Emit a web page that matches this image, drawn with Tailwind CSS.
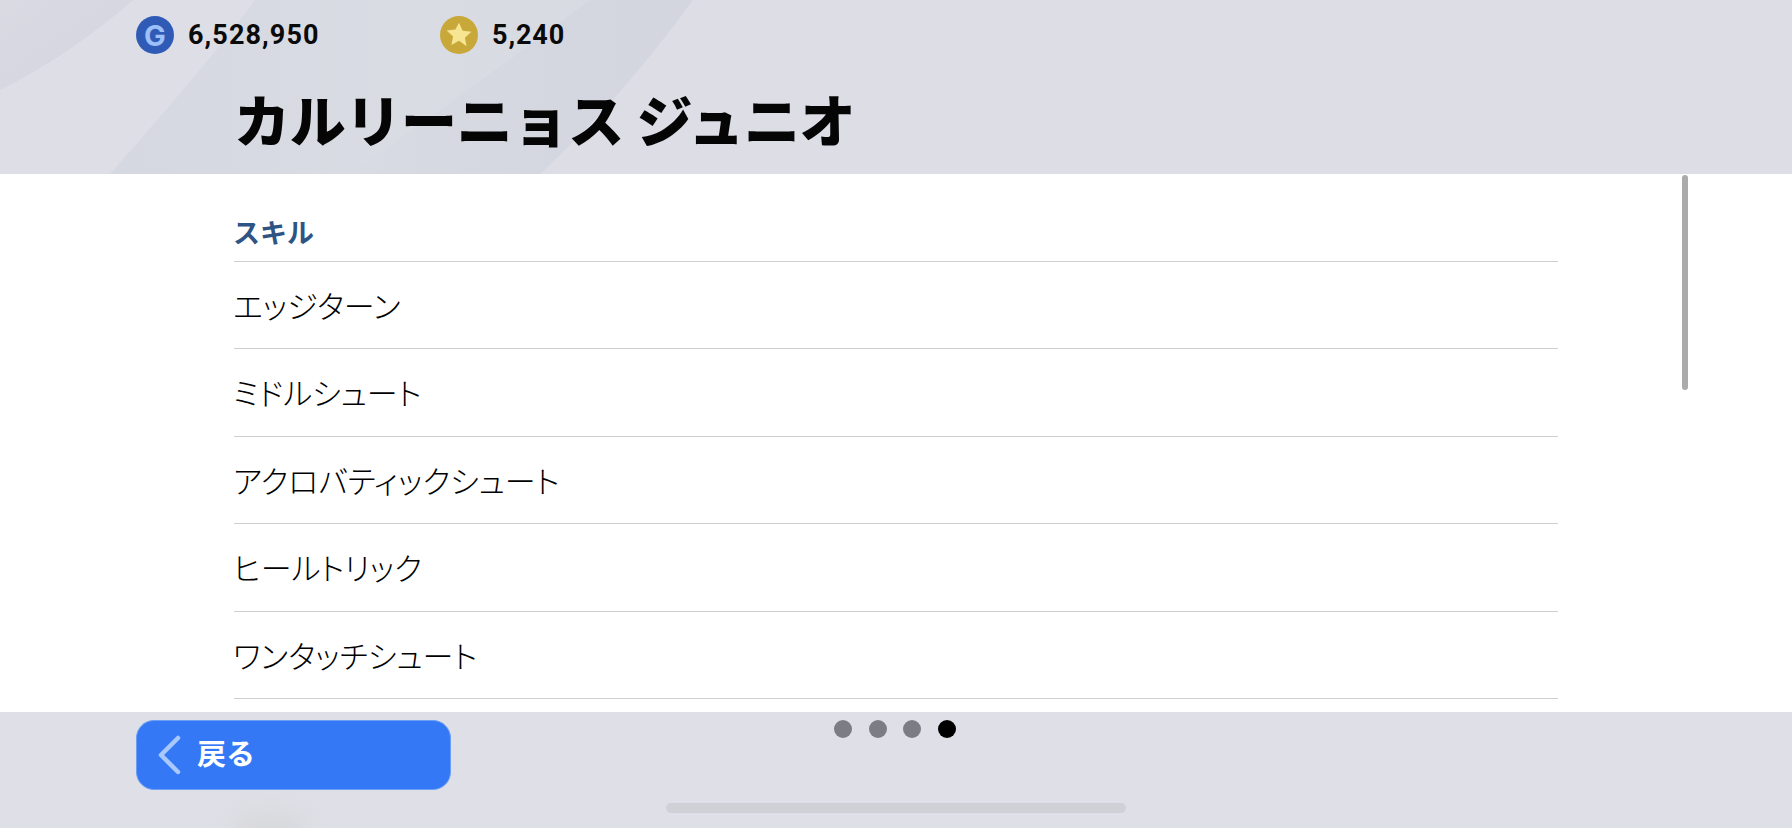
<!DOCTYPE html>
<html lang="ja">
<head>
  <meta charset="UTF-8" />
  <title>スキル</title>
  <script src="https://cdn.jsdelivr.net/npm/@tailwindcss/browser@4"></script>
</head>
<body class="bg-white font-['Noto_Sans_CJK_JP','Noto_Sans',sans-serif]">
  <div class="w-[1792px] h-[828px] flex flex-col overflow-hidden">

    <!-- header -->
    <header class="relative h-[174px] shrink-0 bg-[#dcdde5] overflow-hidden">
      <svg class="absolute inset-0" width="1792" height="174" viewBox="0 0 1792 174">
        <defs>
          <linearGradient id="band" x1="0" y1="0" x2="1" y2="0">
            <stop offset="0" stop-color="#d6d8e1" />
            <stop offset="0.5" stop-color="#dadce4" />
            <stop offset="1" stop-color="#d8dae2" />
          </linearGradient>
          <linearGradient id="edge" x1="0" y1="0" x2="1" y2="0">
            <stop offset="0" stop-color="#d9dbe3" />
            <stop offset="0.6" stop-color="#d4d7df" />
            <stop offset="1" stop-color="#d3d6df" />
          </linearGradient>
          <linearGradient id="corner" x1="0" y1="0" x2="1" y2="1">
            <stop offset="0" stop-color="#d9dae2" />
            <stop offset="1" stop-color="#d3d5de" />
          </linearGradient>
        </defs>
        <path d="M255 0 Q215 55 110 174 L540 174 Q620 100 693 0 Z" fill="url(#band)" />
        <path d="M590 0 Q470 90 350 174 L540 174 Q620 100 693 0 Z" fill="url(#edge)" />
        <path d="M0 90 Q70 55 133 0 L255 0 Q215 55 110 174 L0 174 Z" fill="#dddee6" />
        <path d="M0 0 L133 0 Q70 55 0 90 Z" fill="url(#corner)" />
      </svg>
      <div class="relative flex items-center h-[38px] mt-[16px] ml-[136px]">
        <div class="w-[304px] flex items-center gap-[14px]">
          <span class="w-[38px] h-[38px] rounded-full bg-[#2f5bb7] flex items-center justify-center text-[#9dc0f8] text-[29px] leading-none font-bold font-['Inter',sans-serif]">G</span>
          <span class="text-[27px] leading-none font-bold tracking-[1.1px] text-[#0a0a0a] font-['Roboto',sans-serif]">6,528,950</span>
        </div>
        <div class="flex items-center gap-[14px]">
          <span class="w-[38px] h-[38px] rounded-full bg-[#c9a83a] flex items-center justify-center">
            <svg width="30" height="30" viewBox="0 0 24 24"><path d="M12 2.2l2.9 6.4 7 .8-5.2 4.7 1.4 6.900L12 16.6l-6.100 3.400 1.400-6.900-5.200-4.700 7-.8z" fill="#f6e593" /></svg>
          </span>
          <span class="text-[27px] leading-none font-bold tracking-[0.9px] text-[#0a0a0a] font-['Roboto',sans-serif]">5,240</span>
        </div>
      </div>
      <h1 class="relative ml-[234px] mt-[29px] text-[56px] leading-[70px] font-black text-[#050505] whitespace-nowrap tracking-[-0.3px]">カルリーニョス ジュニオ</h1>
    </header>

    <!-- skill list -->
    <main class="relative h-[538px] shrink-0 bg-white overflow-hidden">
      <div class="ml-[234px] w-[1324px]">
        <h2 class="h-[88px] pt-[37px] -indent-[1px] text-[27px] leading-[42px] font-bold text-[#2e5483] border-b-[1.5px] border-[#cfcfd1]">スキル</h2>
        <ul class="text-[31px] text-black [font-feature-settings:'palt'] font-light -indent-[1px]">
          <li class="h-[87.4px] flex items-center border-b-[1.5px] border-[#cfcfd1]">エッジターン</li>
          <li class="h-[87.4px] flex items-center border-b-[1.5px] border-[#cfcfd1]">ミドルシュート</li>
          <li class="h-[87.4px] flex items-center border-b-[1.5px] border-[#cfcfd1]">アクロバティックシュート</li>
          <li class="h-[87.4px] flex items-center border-b-[1.5px] border-[#cfcfd1]">ヒールトリック</li>
          <li class="h-[87.4px] flex items-center border-b-[1.5px] border-[#cfcfd1]">ワンタッチシュート</li>
        </ul>
      </div>
      <div class="absolute left-[1682px] top-[1px] w-[6px] h-[215px] rounded-full bg-[#ababab]"></div>
    </main>

    <!-- footer -->
    <footer class="relative flex-1 bg-[#dfe0e7] overflow-hidden">
      <div class="absolute left-[235px] top-[102px] w-[70px] h-[30px] rounded-full bg-[#d6d7da] blur-md"></div>
      <div class="relative flex items-start pt-[8px] pl-[136px]">
        <button class="w-[315px] h-[70px] rounded-[18px] bg-[#3578f6] border border-[#6b9ff5] flex items-center text-white text-[29px] font-bold">
          <svg class="ml-[19px]" width="26" height="42" viewBox="0 0 26 42" fill="none"><path d="M22 4 L5 21 L22 38" stroke="#a9c8fb" stroke-width="4.500" stroke-linecap="round" stroke-linejoin="round" /></svg>
          <span class="ml-[15px] mb-[5px]">戻る</span>
        </button>
        <div class="ml-[383px] flex gap-[16.700px]">
          <span class="w-[18px] h-[18px] rounded-full bg-[#7c7c84]"></span>
          <span class="w-[18px] h-[18px] rounded-full bg-[#7c7c84]"></span>
          <span class="w-[18px] h-[18px] rounded-full bg-[#7c7c84]"></span>
          <span class="w-[18px] h-[18px] rounded-full bg-black"></span>
        </div>
      </div>
      <div class="relative mt-[13px] ml-[666px] w-[460px] h-[10px] rounded-[5px] bg-[#d0d1d7]"></div>
    </footer>
  </div>
</body>
</html>
